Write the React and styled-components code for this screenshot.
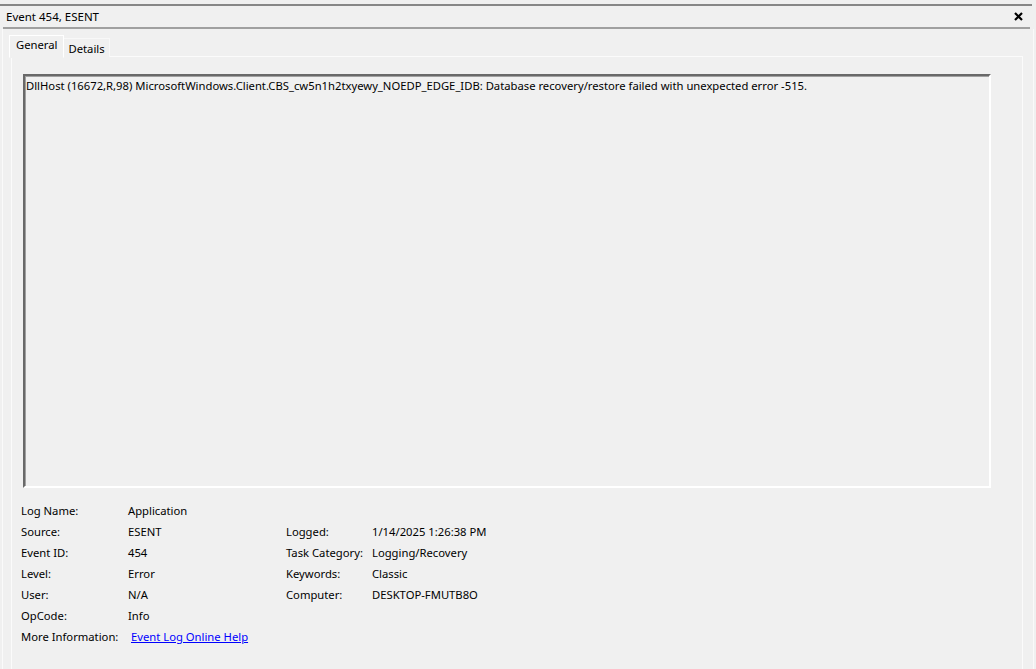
import React from 'react';
import styled, { createGlobalStyle } from 'styled-components';

const GlobalStyle = createGlobalStyle`
  html, body {
    margin: 0;
    padding: 0;
    background: #f0f0f0;
    overflow: hidden;
  }
  body {
    font-family: "Noto Sans", "Open Sans", Arial, sans-serif;
    font-size: 11.25px;
    color: #000;
  }
`;

const leftFields = [
  ['Log Name:', 'Application'],
  ['Source:', 'ESENT'],
  ['Event ID:', '454'],
  ['Level:', 'Error'],
  ['User:', 'N/A'],
  ['OpCode:', 'Info'],
];

const rightFields = [
  ['Logged:', '1/14/2025 1:26:38 PM'],
  ['Task Category:', 'Logging/Recovery'],
  ['Keywords:', 'Classic'],
  ['Computer:', 'DESKTOP-FMUTB8O'],
];

function App() {
  return (
    <>
      <GlobalStyle />
      <Window>
        <TopRule />
        <TitleBar>
          <Title>Event 454, ESENT</Title>
          <CloseButton aria-label="Close">
            <svg width="9" height="9" viewBox="0 0 9 9">
              <path d="M1 1 L8 8 M8 1 L1 8" stroke="#000" strokeWidth="2.2" />
            </svg>
          </CloseButton>
        </TitleBar>
        <TitleRule />
        <Frame>
          <TabStrip>
            <Tab selected>General</Tab>
            <Tab>Details</Tab>
          </TabStrip>
          <TabPanel>
            <MessageBox>
              DllHost (16672,R,98) MicrosoftWindows.Client.CBS_cw5n1h2txyewy_NOEDP_EDGE_IDB: Database recovery/restore failed with unexpected error -515.
            </MessageBox>
            <Fields>
              <Column>
                {leftFields.map(([label, value]) => (
                  <Row key={label} labelWidth={107}>
                    <Label>{label}</Label>
                    <Value>{value}</Value>
                  </Row>
                ))}
                <Row labelWidth={110}>
                  <Label>More Information:</Label>
                  <HelpLink href="#">Event Log Online Help</HelpLink>
                </Row>
              </Column>
              <Column offset>
                {rightFields.map(([label, value]) => (
                  <Row key={label} labelWidth={86}>
                    <Label>{label}</Label>
                    <Value>{value}</Value>
                  </Row>
                ))}
              </Column>
            </Fields>
          </TabPanel>
        </Frame>
      </Window>
    </>
  );
}

export default App;

const Window = styled.div`
  width: 1036px;
  height: 669px;
  padding-top: 4px;
  box-sizing: border-box;
  display: flex;
  flex-direction: column;
  overflow: hidden;
`;

const TopRule = styled.div`
  height: 2px;
  margin-right: 4px;
  background: #878787;
`;

const TitleBar = styled.div`
  height: 21px;
  display: flex;
  align-items: center;
  justify-content: space-between;
  padding: 0 13px 0 6px;
`;

const Title = styled.span`
  font-size: 11.5px;
  line-height: 21px;
`;

const CloseButton = styled.div`
  width: 9px;
  height: 9px;
  display: flex;
  margin-top: -1px;
`;

const TitleRule = styled.div`
  height: 2px;
  margin: 0 6px 0 3px;
  background: #a0a0a0;
`;

const Frame = styled.div`
  flex: 1;
  margin: 0 2px 0 2px;
  border-left: 1px solid #fafafa;
  border-right: 1px solid #fafafa;
  padding: 6px 10px 0 6px;
  display: flex;
  flex-direction: column;
`;

const TabStrip = styled.div`
  display: flex;
  align-items: flex-end;
  height: 22px;
  position: relative;
  z-index: 1;
`;

const Tab = styled.div`
  height: ${(p) => (p.selected ? '23px' : '19px')};
  padding: ${(p) => (p.selected ? '0 6px' : '0 4px 0 4px')};
  box-sizing: border-box;
  background: #f0f0f0;
  border: 1px solid ${(p) => (p.selected ? '#ffffff' : '#f8f8f8')};
  border-bottom: ${(p) => (p.selected ? '1px solid #f0f0f0' : 'none')};
  border-left: ${(p) => (p.selected ? '1px solid #ffffff' : 'none')};
  line-height: ${(p) => (p.selected ? '18px' : '19px')};
  margin-bottom: ${(p) => (p.selected ? '-1px' : '0')};
`;

const TabPanel = styled.div`
  flex: 1;
  margin-top: -1px;
  margin-left: 2px;
  border: 1px solid #fbfbfb;
  border-bottom: none;
  padding: 17px 31px 0 11px;
`;

const MessageBox = styled.div`
  height: 414px;
  box-sizing: border-box;
  border-top: 2px solid #696969;
  border-left: 2px solid #696969;
  border-right: 2px solid #ffffff;
  border-bottom: 2px solid #ffffff;
  box-shadow: inset 1px 1px 0 #a0a0a0;
  padding: 2px 1px;
  line-height: 16px;
  white-space: nowrap;
  overflow: hidden;
`;

const Fields = styled.div`
  display: flex;
  margin-top: 12px;
  margin-left: -2px;
`;

const Column = styled.div`
  display: flex;
  flex-direction: column;
  width: 265px;
  padding-top: ${(p) => (p.offset ? '21px' : '0')};
`;

const Row = styled.div`
  display: grid;
  grid-template-columns: ${(p) => p.labelWidth}px auto;
  height: 21px;
  line-height: 21px;
  white-space: nowrap;
`;

const Label = styled.span``;

const Value = styled.span``;

const HelpLink = styled.a`
  color: #0000ff;
  text-decoration: underline;
`;
